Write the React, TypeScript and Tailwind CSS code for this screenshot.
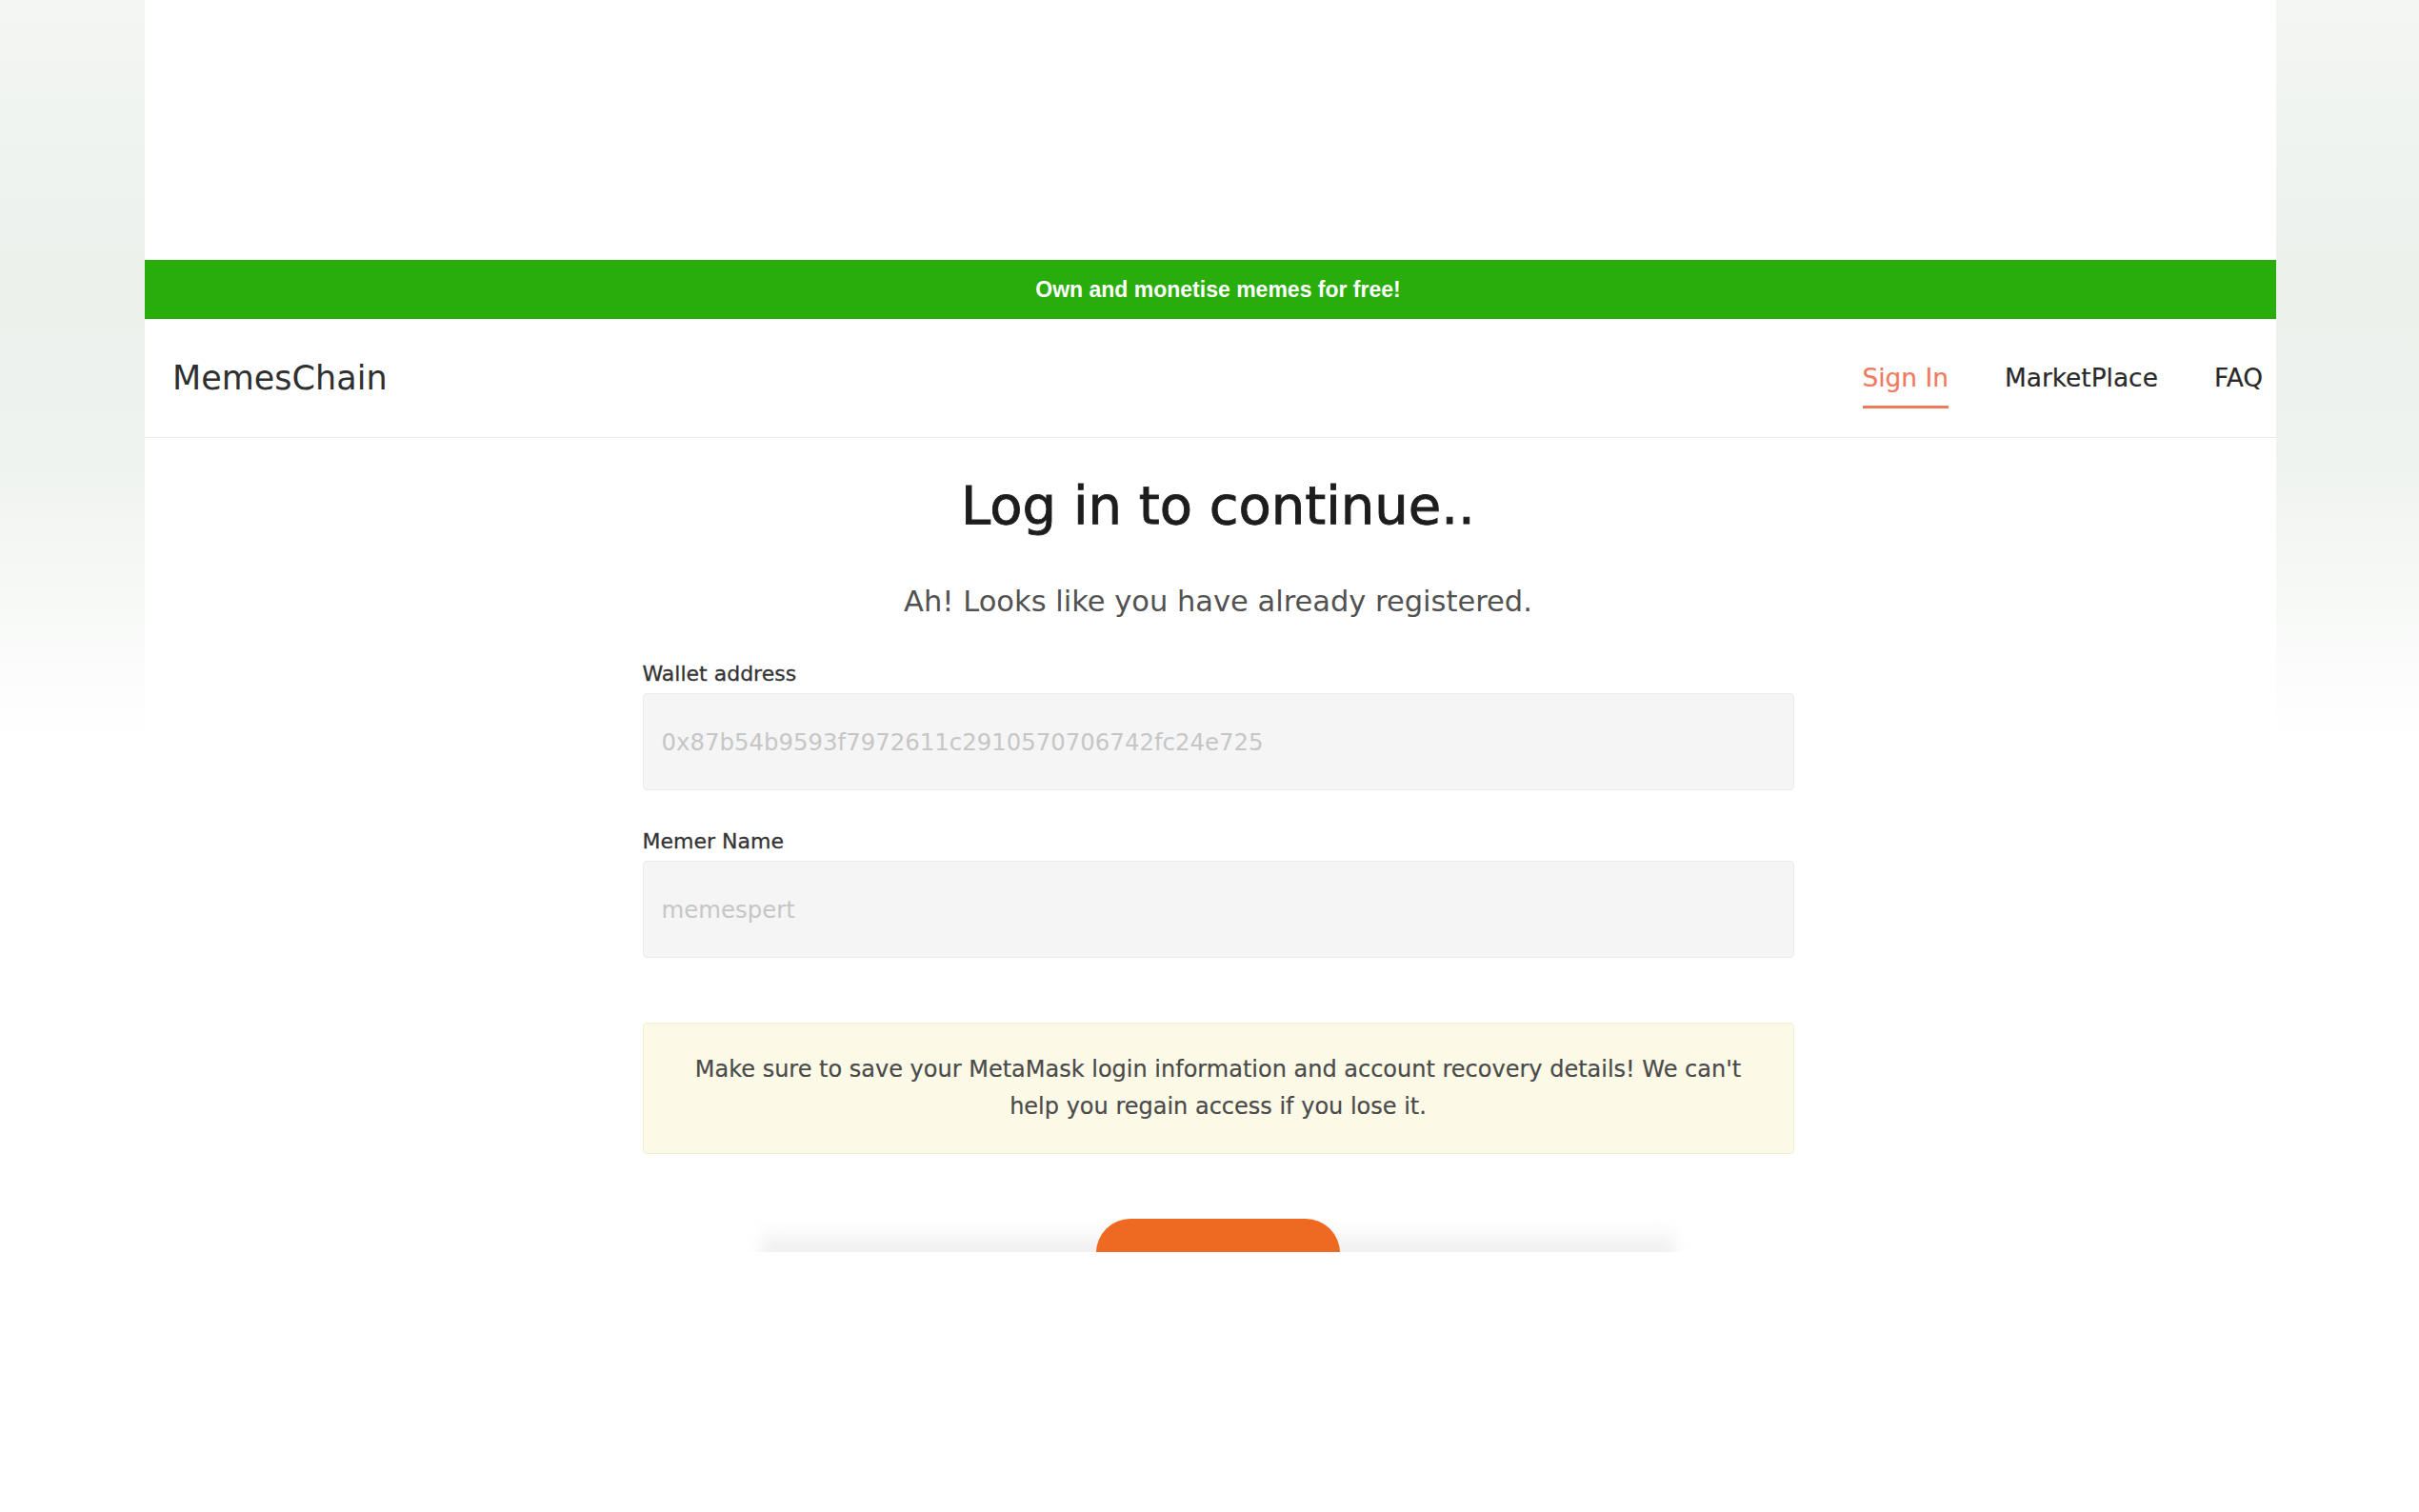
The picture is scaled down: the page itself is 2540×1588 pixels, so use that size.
import React from "react"

function SideStrip({ width }: { width: string }) {
  return (
    <div className={`${width} shrink-0`}>
      <div className="h-[780px] bg-[linear-gradient(to_bottom,#f3f6f3_0%,#ecf1ec_38%,#eff3ef_62%,#ffffff_100%)]" />
    </div>
  )
}

function Field({ label, placeholder, className }: { label: string; placeholder: string; className: string }) {
  return (
    <div className={`flex w-full flex-col ${className}`}>
      <label className="text-[22px] leading-[28px] text-[#333333] [-webkit-text-stroke:0.3px_#333333]">{label}</label>
      <input
        readOnly
        placeholder={placeholder}
        className="mt-[6px] h-[102px] w-full rounded-[4px] border border-[#ebebeb] bg-[#f5f5f5] px-[19px] text-[24.4px] outline-none placeholder:text-[#c6c6c6]"
      />
    </div>
  )
}

export default function App() {
  const links = [
    { name: "Sign In", active: true },
    { name: "MarketPlace", active: false },
    { name: "FAQ", active: false },
  ]

  return (
    <div className="min-h-[1588px] w-full bg-white font-['DejaVu_Sans',sans-serif]">
      <div className="flex h-[1315px] overflow-hidden">
        <SideStrip width="w-[152px]" />

        <div className="flex w-[2238px] shrink-0 flex-col bg-white">
          <div className="h-[273px]" />
          <div className="flex h-[62px] items-center justify-center bg-[#29ad0b] pl-[16px] font-['Liberation_Sans',sans-serif] text-[23px] font-bold text-white">
            Own and monetise memes for free!
          </div>

          <header className="flex h-[125px] items-center justify-between border-b border-[#ececec] pl-[29px] pr-[14px]">
            <span className="text-[35px] leading-[40px] text-[#2f2f2f]">MemesChain</span>
            <nav className="mt-[16px] flex gap-[59px] text-[26.4px] leading-[32px] [-webkit-text-stroke:0.2px_currentColor]">
              {links.map((link) => (
                <a
                  key={link.name}
                  href="#"
                  className={
                    link.active
                      ? "border-b-[3px] border-[#ef7c57] pb-[13px] text-[#ef7b5f]"
                      : "border-b-[3px] border-transparent pb-[13px] text-[#2a2a2a]"
                  }
                >
                  {link.name}
                </a>
              ))}
            </nav>
          </header>

          <main className="flex flex-col items-center pl-[16px]">
            <h1 className="mt-[37px] text-[56px] leading-[68px] text-[#1d1d1d] [-webkit-text-stroke:0.9px_#1d1d1d]">
              Log in to continue..
            </h1>
            <p className="mt-[47px] text-[30.5px] leading-[40px] text-[#525252]">
              Ah! Looks like you have already registered.
            </p>

            <div className="flex w-[1209px] flex-col">
              <Field label="Wallet address" placeholder="0x87b54b9593f7972611c2910570706742fc24e725" className="mt-[42px]" />
              <Field label="Memer Name" placeholder="memespert" className="mt-[40px]" />

              <div className="mt-[68px] rounded-[4px] border border-[#f3efd2] bg-[#fcfae7] px-[46px] py-[29px] text-center text-[24px] leading-[39px] text-[#4a4a4a] [-webkit-text-stroke:0.2px_#4a4a4a]">
                Make sure to save your MetaMask login information and account recovery details! We can't help you regain
                access if you lose it.
              </div>
            </div>

            <div className="relative mt-[68px] flex h-[35px] w-[1000px] justify-center overflow-hidden">
              {/* soft shadow band behind the button */}
              <div className="absolute bottom-[-10px] left-[20px] right-[20px] h-[40px] bg-[linear-gradient(to_bottom,rgba(255,255,255,0),#e9e9e9)] blur-[8px]" />
              <button className="relative h-[72px] w-[256px] rounded-[36px] bg-[#ee6a22]" />
            </div>
          </main>
        </div>

        <SideStrip width="w-[150px]" />
      </div>
    </div>
  )
}
